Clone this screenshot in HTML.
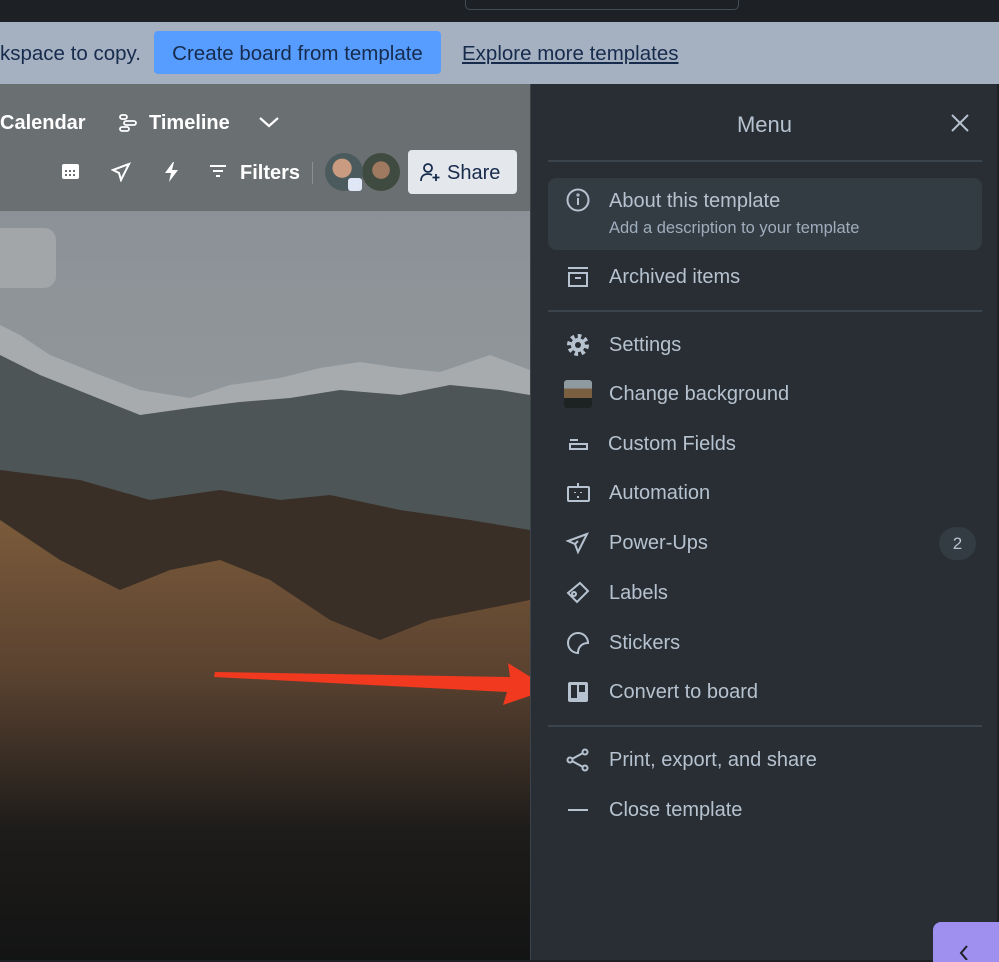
<!DOCTYPE html>
<html><head><style>
*{margin:0;padding:0;box-sizing:border-box}
body{width:999px;height:960px;overflow:hidden;font-family:"Liberation Sans",sans-serif;background:#1d2125;position:relative}
.abs{position:absolute}
.mi{position:absolute;left:548px;width:434px;height:44px;display:flex;align-items:center;color:#b6c2cf;font-size:20px}
.mi svg{position:absolute;left:17px;width:26px;height:26px}
.mi span{position:absolute;left:61px;top:11px}
.sep{position:absolute;left:548px;width:434px;height:2px;background:#3b444c}
</style></head><body>
<div class="abs" style="left:0;top:0;width:999px;height:22px;background:#1d2125"></div>
<div class="abs" style="left:465px;top:-6px;width:274px;height:16px;border:1px solid #454d55;border-radius:5px"></div>
<div class="abs" style="left:0;top:22px;width:999px;height:62px;background:#a5b1c1"></div>
<div class="abs" style="left:0;top:42px;font-size:20.5px;color:#172b4d">kspace to copy.</div>
<div class="abs" style="left:154px;top:31px;width:287px;height:43px;background:#579dff;border-radius:4px;color:#172b4d;font-size:20.5px;line-height:45px;text-align:center">Create board from template</div>
<div class="abs" style="left:462px;top:42px;font-size:20.5px;color:#172b4d;text-decoration:underline">Explore more templates</div>
<svg class="abs" style="left:0;top:84px" width="530" height="876" viewBox="0 84 530 876">
<defs>
<linearGradient id="sky" x1="0" y1="0" x2="0" y2="1"><stop offset="0" stop-color="#878f95"/><stop offset="1" stop-color="#a3a2a2"/></linearGradient>
<linearGradient id="brown" x1="0" y1="0" x2="0" y2="1"><stop offset="0" stop-color="#7a5a3a"/><stop offset="0.35" stop-color="#5a4230"/><stop offset="0.7" stop-color="#1e1c1a"/><stop offset="1" stop-color="#131414"/></linearGradient>
</defs>
<rect x="0" y="84" width="530" height="876" fill="url(#sky)"/>
<polygon points="0,325 20,335 50,355 100,375 140,390 190,398 230,385 280,378 320,368 360,362 400,368 440,372 490,355 530,370 530,520 0,520" fill="#a7abad"/>
<polygon points="0,355 40,375 90,395 140,415 190,408 240,402 290,398 340,390 400,395 450,385 500,390 530,395 530,560 0,560" fill="#4d5557"/>
<polygon points="0,470 80,480 150,500 220,490 280,500 330,495 400,510 470,520 530,530 530,960 0,960" fill="#3a2f26"/>
<polygon points="0,520 60,560 120,590 170,570 220,560 270,580 330,620 380,640 430,620 480,610 530,600 530,960 0,960" fill="url(#brown)"/>
<rect x="0" y="84" width="530" height="127" fill="#6a6f72"/>
<rect x="-10" y="228" width="66" height="60" rx="12" fill="#a2a6a9"/>
</svg>
<div class="abs" style="left:0;top:112px;font-size:20px;font-weight:bold;color:#fff">Calendar</div>
<svg class="abs" style="left:118px;top:113px" width="20" height="20" viewBox="0 0 20 20" fill="none" stroke="#fff" stroke-width="1.8"><rect x="2" y="2" width="7" height="4" rx="2"/><rect x="6" y="8" width="12" height="4" rx="2"/><rect x="2" y="14" width="9" height="4" rx="2"/></svg>
<div class="abs" style="left:149px;top:112px;font-size:20px;font-weight:bold;color:#fff">Timeline</div>
<svg class="abs" style="left:258px;top:114px" width="22" height="16" viewBox="0 0 22 16" fill="none" stroke="#fff" stroke-width="2.2"><path d="M2 4l9 8 9-8"/></svg>
<svg class="abs" style="left:61px;top:162px" width="19" height="19" viewBox="0 0 19 19"><rect x="1" y="2" width="17" height="15" rx="2" fill="#fff"/><g fill="#6a6f72"><rect x="4" y="8" width="2" height="2"/><rect x="8" y="8" width="2" height="2"/><rect x="12" y="8" width="2" height="2"/><rect x="4" y="12" width="2" height="2"/><rect x="8" y="12" width="2" height="2"/><rect x="12" y="12" width="2" height="2"/></g></svg>
<svg class="abs" style="left:111px;top:162px" width="20" height="20" viewBox="0 0 20 20" fill="none" stroke="#fff" stroke-width="2"><path d="M18 2L2 8l6 3 2 7z"/></svg>
<svg class="abs" style="left:162px;top:161px" width="18" height="22" viewBox="0 0 18 22" fill="#fff"><path d="M11 1L3 12h6l-2 9 9-12h-6l2-8z"/></svg>
<svg class="abs" style="left:208px;top:163px" width="20" height="16" viewBox="0 0 20 16" stroke="#fff" stroke-width="2"><path d="M2 3h16M5 8h10M8 13h4"/></svg>
<div class="abs" style="left:240px;top:162px;font-size:20px;font-weight:bold;color:#fff">Filters</div>
<div class="abs" style="left:312px;top:162px;width:1px;height:22px;background:#8b9094"></div>
<div class="abs" style="left:362px;top:153px;width:38px;height:38px;border-radius:50%;background:radial-gradient(circle at 50% 45%,#a07a60 0 30%,#3f4a40 32%)"></div>
<div class="abs" style="left:325px;top:153px;width:38px;height:38px;border-radius:50%;background:radial-gradient(circle at 45% 40%,#c99b80 0 30%,#4b5a5c 32%)"></div>
<div class="abs" style="left:348px;top:178px;width:14px;height:13px;border-radius:3px;background:#dfe6f6"></div>
<div class="abs" style="left:408px;top:150px;width:109px;height:44px;background:#e4e7eb;border-radius:4px;color:#172b4d;font-size:20px;line-height:46px;padding-left:39px">Share</div>
<svg class="abs" style="left:420px;top:162px" width="22" height="20" viewBox="0 0 22 20" fill="none" stroke="#172b4d" stroke-width="1.8"><circle cx="8" cy="6" r="4"/><path d="M1 19c0-5 3-7 7-7 2 0 3 .5 4 1M16 12v7M12.5 15.5h7"/></svg>
<svg class="abs" style="left:210px;top:655px" width="350" height="55"><polygon points="5,17 300,22 298,8 340,34 293,50 297,37 4,22" fill="#f0391f"/></svg>
<div class="abs" style="left:530px;top:84px;width:469px;height:876px;background:#282e33;border-left:1px solid #3b444c;border-right:2px solid #1d2125"></div>
<div class="abs" style="left:530px;top:112px;width:469px;text-align:center;color:#b6c2cf;font-size:22px">Menu</div>
<svg class="abs" style="left:950px;top:113px" width="20" height="20" viewBox="0 0 20 20" stroke="#b6c2cf" stroke-width="2"><path d="M2 2l16 16M18 2L2 18"/></svg>
<div class="sep" style="top:160px"></div>
<div class="abs" style="left:548px;top:178px;width:434px;height:72px;background:#333b43;border-radius:8px"></div>
<svg class="abs" style="left:565px;top:187px" width="26" height="26" viewBox="0 0 26 26" fill="none" stroke="#b6c2cf" stroke-width="2"><circle cx="13" cy="13" r="10.5"/><path d="M13 11v7"/><circle cx="13" cy="8" r="0.6"/></svg>
<div class="abs" style="left:609px;top:190px;color:#b6c2cf;font-size:20px">About this template</div>
<div class="abs" style="left:609px;top:219px;color:#9fadbc;font-size:16.5px">Add a description to your template</div>
<div class="mi" style="top:255px"><svg viewBox="0 0 26 26" fill="none" stroke="#b6c2cf" stroke-width="2"><path d="M3 4h20M4 9h18v13H4zM10 14h6"/></svg><span>Archived items</span></div>
<div class="sep" style="top:310px"></div>
<div class="mi" style="top:323px"><svg viewBox="0 0 26 26"><circle cx="13" cy="13" r="8" fill="none" stroke="#b6c2cf" stroke-width="6" stroke-dasharray="3.2 3"/><circle cx="13" cy="13" r="7" fill="#b6c2cf"/><circle cx="13" cy="13" r="3" fill="#282e33"/></svg><span>Settings</span></div>
<div class="mi" style="top:372px"><div class="abs" style="left:16px;top:8px;width:28px;height:28px;border-radius:3px;background:linear-gradient(#8f9aa0 0 30%,#7a6040 30% 65%,#1d2222 65%)"></div><span>Change background</span></div>
<div class="mi" style="top:422px"><svg viewBox="0 0 26 26" fill="none" stroke="#b6c2cf" stroke-width="2"><path d="M5 9h8M5 13h17v5H5z"/></svg><span style="left:60px">Custom Fields</span></div>
<div class="mi" style="top:471px"><svg viewBox="0 0 26 26" fill="none" stroke="#b6c2cf" stroke-width="2"><rect x="3" y="7" width="21" height="14" rx="1"/><path d="M13 3v4M10 12v1M16 12v1M12 17h2"/></svg><span>Automation</span></div>
<div class="mi" style="top:521px"><svg viewBox="0 0 26 26" fill="none" stroke="#b6c2cf" stroke-width="2"><path d="M22 4L3 11l7 3 3 8z"/><path d="M10 14l3-3"/></svg><span>Power-Ups</span><div class="abs" style="left:391px;top:6px;width:37px;height:33px;border-radius:17px;background:#333b43;text-align:center;line-height:33px;font-size:17px">2</div></div>
<div class="mi" style="top:571px"><svg viewBox="0 0 26 26" fill="none" stroke="#b6c2cf" stroke-width="2"><path d="M15 3l8 8-11 11-9-9z"/><circle cx="9" cy="14" r="2"/></svg><span>Labels</span></div>
<div class="mi" style="top:621px"><svg viewBox="0 0 26 26" fill="none" stroke="#b6c2cf" stroke-width="2"><path d="M23 13A10 10 0 1 0 13 23c0-6 4-10 10-10z"/></svg><span>Stickers</span></div>
<div class="mi" style="top:670px"><svg viewBox="0 0 26 26"><rect x="3" y="3" width="20" height="20" rx="2" fill="#b6c2cf"/><rect x="6" y="6" width="6" height="13" fill="#282e33"/><rect x="14" y="6" width="6" height="7" fill="#282e33"/></svg><span>Convert to board</span></div>
<div class="sep" style="top:725px"></div>
<div class="mi" style="top:738px"><svg viewBox="0 0 26 26" fill="none" stroke="#b6c2cf" stroke-width="2"><circle cx="5" cy="13" r="2.5"/><circle cx="20" cy="5" r="2.5"/><circle cx="20" cy="21" r="2.5"/><path d="M7 12l11-6M7 14l11 6"/></svg><span>Print, export, and share</span></div>
<div class="mi" style="top:788px"><svg viewBox="0 0 26 26" stroke="#b6c2cf" stroke-width="2"><path d="M3 13h20"/></svg><span>Close template</span></div>
<div class="abs" style="left:933px;top:922px;width:66px;height:40px;background:#9f8fef;border-radius:8px 0 0 0"></div>
<svg class="abs" style="left:957px;top:944px" width="14" height="16" viewBox="0 0 14 16" fill="none" stroke="#1d2125" stroke-width="2"><path d="M10 2L4 9l6 7"/></svg>
</body></html>
